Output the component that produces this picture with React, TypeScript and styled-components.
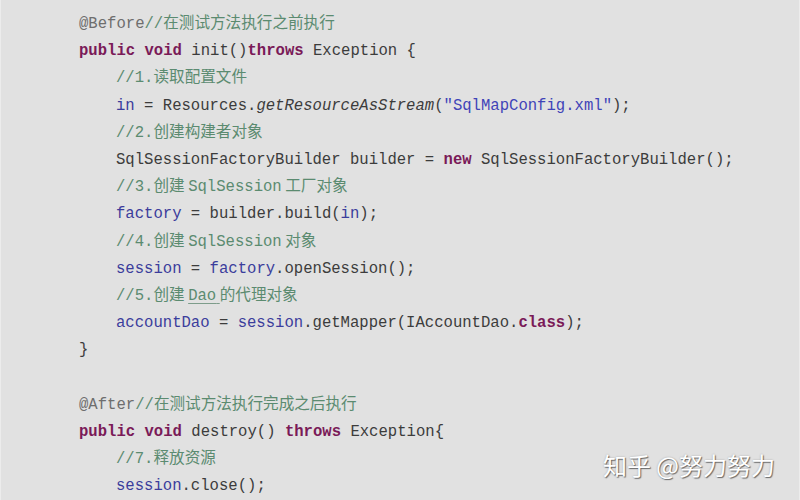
import React from "react";
import styled, { createGlobalStyle } from "styled-components";

const Global = createGlobalStyle`
  html, body { margin: 0; padding: 0; background: #e1e1e1; }
  body { width: 800px; height: 500px; overflow: hidden; }
`;

const Frame = styled.div`
  position: relative;
  width: 800px;
  height: 500px;
  box-sizing: border-box;
  background: #e1e1e1;
  border-left: 1px solid #ececec;
  border-right: 1px solid #ececec;
  padding: 11px 0 0 78px;
  font-family: "Liberation Mono", "Noto Sans CJK SC", monospace;
  font-size: 15.6px;
  color: #3c3c3c;
`;

const Code = styled.div`
  display: flex;
  flex-direction: column;
`;

const Line = styled.div<{ $indent?: boolean }>`
  height: 27.2px;
  line-height: 27.2px;
  white-space: pre;
  padding-left: ${(p) => (p.$indent ? "37px" : "0")};
`;

const Kw = styled.span`
  color: #7a1a58;
  font-weight: bold;
`;

const Comment = styled.span`
  color: #5b8b70;
`;

const Cjk = styled.span`
  font-family: "Noto Sans CJK SC", sans-serif;
  font-size: 15.6px;
  line-height: 1;
`;

const Anno = styled.span`
  color: #6e6e6e;
`;

const Field = styled.span`
  color: #3b3d9c;
`;

const Str = styled.span`
  color: #3f44b8;
`;

const Italic = styled.span`
  font-style: italic;
`;

const Under = styled.span`
  text-decoration: underline;
  text-decoration-color: #7d9c8a;
  text-underline-offset: 3px;
`;

const Watermark = styled.div`
  position: absolute;
  right: 24px;
  bottom: 18px;
  font-family: "Noto Sans CJK SC", sans-serif;
  font-size: 24px;
  color: #ffffff;
  text-shadow: 1px 1px 1px rgba(0, 0, 0, 0.5), 0 0 2px rgba(0, 0, 0, 0.25);
`;

export default function App() {
  return (
    <>
      <Global />
      <Frame>
        <Code>
          <Line>
            <Anno>@Before</Anno>
            <Comment>
              //<Cjk>在测试方法执行之前执行</Cjk>
            </Comment>
          </Line>
          <Line>
            <Kw>public</Kw> <Kw>void</Kw> init()<Kw>throws</Kw> Exception {"{"}
          </Line>
          <Line $indent>
            <Comment>
              //1.<Cjk>读取配置文件</Cjk>
            </Comment>
          </Line>
          <Line $indent>
            <Field>in</Field> = Resources.<Italic>getResourceAsStream</Italic>(
            <Str>"SqlMapConfig.xml"</Str>);
          </Line>
          <Line $indent>
            <Comment>
              //2.<Cjk>创建构建者对象</Cjk>
            </Comment>
          </Line>
          <Line $indent>
            SqlSessionFactoryBuilder builder = <Kw>new</Kw> SqlSessionFactoryBuilder();
          </Line>
          <Line $indent>
            <Comment>
              //3.<Cjk>创建 </Cjk>SqlSession<Cjk> 工厂对象</Cjk>
            </Comment>
          </Line>
          <Line $indent>
            <Field>factory</Field> = builder.build(<Field>in</Field>);
          </Line>
          <Line $indent>
            <Comment>
              //4.<Cjk>创建 </Cjk>SqlSession<Cjk> 对象</Cjk>
            </Comment>
          </Line>
          <Line $indent>
            <Field>session</Field> = <Field>factory</Field>.openSession();
          </Line>
          <Line $indent>
            <Comment>
              //5.<Cjk>创建 </Cjk>
              <Under>
                Dao<Cjk> </Cjk>
              </Under>
              <Cjk>的代理对象</Cjk>
            </Comment>
          </Line>
          <Line $indent>
            <Field>accountDao</Field> = <Field>session</Field>.getMapper(IAccountDao.<Kw>class</Kw>);
          </Line>
          <Line>{"}"}</Line>
          <Line> </Line>
          <Line>
            <Anno>@After</Anno>
            <Comment>
              //<Cjk>在测试方法执行完成之后执行</Cjk>
            </Comment>
          </Line>
          <Line>
            <Kw>public</Kw> <Kw>void</Kw> destroy() <Kw>throws</Kw> Exception{"{"}
          </Line>
          <Line $indent>
            <Comment>
              //7.<Cjk>释放资源</Cjk>
            </Comment>
          </Line>
          <Line $indent>
            <Field>session</Field>.close();
          </Line>
        </Code>
        <Watermark>知乎 @努力努力</Watermark>
      </Frame>
    </>
  );
}
